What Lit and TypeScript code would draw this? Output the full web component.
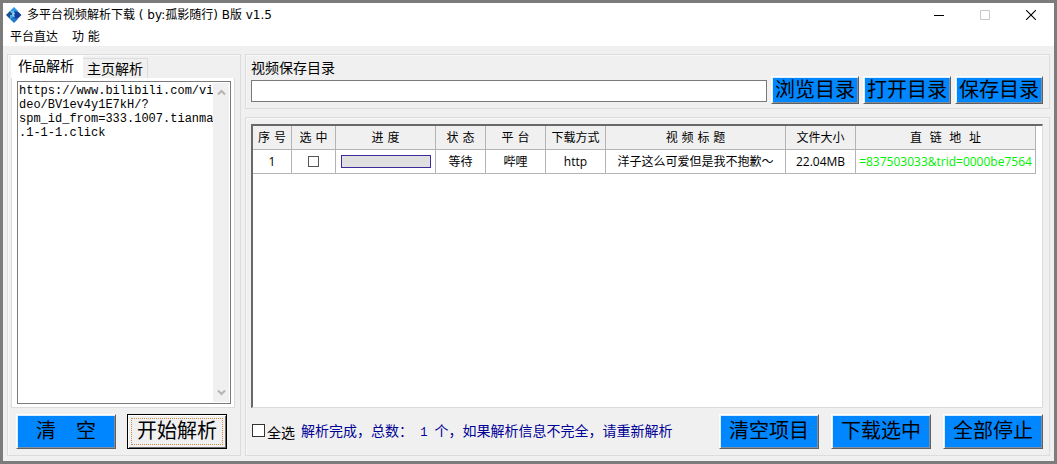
import { LitElement, html, css } from "lit";
import { customElement, state } from "lit/decorators.js";

interface Task {
  index: number;
  state: string;
  platform: string;
  protocol: string;
  title: string;
  size: string;
  url: string;
}

@customElement("app-root")
export class AppRoot extends LitElement {
  static styles = css`
    :host {
      display: block;
      --ui: "Open Sans", "Noto Sans CJK SC", sans-serif;
      --song: "Noto Sans CJK SC", sans-serif;
      --mono: "Liberation Mono", "Noto Sans CJK SC", monospace;
      --line: #dcdcdc;
      font: 12px/16px var(--ui);
      color: #000;
    }
    * {
      box-sizing: border-box;
    }
    button,
    input,
    textarea {
      font: inherit;
      color: inherit;
      margin: 0;
      padding: 0;
      border-radius: 0;
    }
    .window {
      display: flex;
      flex-direction: column;
      min-height: 100vh;
      border: 3px solid #7c7c7c;
      background: #f0f0f0;
    }
    .titlebar {
      display: flex;
      align-items: center;
      height: 24px;
      padding-left: 3px;
      background: #fff;
    }
    .logo {
      width: 16px;
      height: 16px;
      margin-right: 5px;
    }
    .title {
      flex: 1;
      margin: 0;
      font: 12px/16px "DejaVu Sans", "Noto Sans CJK SC", sans-serif;
    }
    .control {
      width: 46px;
      height: 24px;
      border: 0;
      background: none;
    }
    .control svg {
      display: block;
      margin: 0 auto;
    }
    .menu {
      display: flex;
      gap: 14px;
      height: 19px;
      padding: 1px 7px 0;
      background: #fff;
      font-family: "DejaVu Sans", "Noto Sans CJK SC", sans-serif;
    }
    .menu button {
      border: 0;
      background: none;
    }
    .body {
      flex: 1;
      display: flex;
      gap: 4px;
      padding: 8px 4px 5px;
    }
    .group {
      border: 1px solid var(--line);
      box-shadow: inset 1px 1px #f8f8f8;
    }
    .left {
      display: flex;
      flex-direction: column;
      flex: none;
      width: 234px;
      padding: 0 5px 6px 3px;
      font: 14px/16px var(--song);
    }
    .tabs {
      display: flex;
      align-items: flex-end;
      height: 23px;
    }
    .tab {
      height: 20px;
      padding: 0 4px 2px;
      border: 1px solid var(--line);
      border-left: 0;
      border-bottom: 0;
      background: #f0f0f0;
    }
    .tab.active {
      height: 23px;
      padding: 0 8px 4px 7px;
      border-color: #fff;
      background: #fff;
    }
    .panel {
      flex: 1;
      display: flex;
      padding: 3px 3px 3px 5px;
      border: 1px solid var(--line);
      border-top: 0;
      background: #fff;
    }
    .editor {
      flex: 1;
      display: flex;
      border: 1px solid #7a7a7a;
      padding: 1px;
    }
    .editor textarea {
      flex: 1;
      min-width: 0;
      padding-top: 1px;
      border: 0;
      outline: 0;
      resize: none;
      overflow: hidden;
      background: #fff;
      font: 12px/14px var(--mono);
      white-space: pre;
    }
    .scroll {
      display: flex;
      flex-direction: column;
      justify-content: space-between;
      align-items: center;
      width: 16px;
      padding: 6px 0;
      background: #f0f0f0;
    }
    .actions {
      display: flex;
      gap: 11px;
      padding: 6px 0 0 5px;
    }
    .push {
      width: 100px;
      height: 35px;
      padding-bottom: 3px;
      border: 1px solid;
      border-color: #fff #606060 #606060 #fff;
      background: #0087ff;
      box-shadow: inset 1px 1px #d8ecff, inset -1px -1px #7f8fa0;
      font: 20px/24px var(--song);
      white-space: nowrap;
    }
    .push.small {
      flex: none;
      width: 88px;
      height: 28px;
    }
    .push.default {
      border-color: #000;
      background: #f0f0f0;
      box-shadow: inset 1px 1px #fff, inset -1px -1px #696969;
      padding: 3px;
    }
    .focus {
      display: block;
      padding-bottom: 3px;
      border: 1px dotted #c98a4a;
      line-height: 22px;
    }
    .right {
      flex: 1;
      min-width: 0;
      display: flex;
      flex-direction: column;
      gap: 8px;
    }
    .save {
      padding: 4px 6px 4px 5px;
    }
    .save label {
      display: block;
      padding-bottom: 1px;
      font: 14px/16px var(--song);
    }
    .path {
      display: flex;
      align-items: center;
      gap: 4px;
    }
    .path input {
      flex: 1;
      min-width: 0;
      height: 22px;
      margin-top: 2px;
      border: 1px solid #7a7a7a;
      background: #fff;
    }
    .list {
      flex: 1;
      display: flex;
      flex-direction: column;
      padding: 6px 6px 6px 5px;
    }
    .grid {
      flex: 1;
      padding-right: 6px;
      border: 1px solid;
      border-width: 2px 1px 1px 2px;
      border-color: #696969 #dcdcdc #dcdcdc #696969;
      background: #fff;
    }
    table {
      width: 100%;
      table-layout: fixed;
      border-spacing: 0;
    }
    th,
    td {
      height: 24px;
      padding: 0 3px;
      border: 0 solid #b4b4b4;
      border-width: 0 1px 1px 0;
      font-weight: 400;
      text-align: center;
      white-space: nowrap;
      overflow: hidden;
    }
    th {
      background: #f0f0f0;
      font-family: "DejaVu Sans", "Noto Sans CJK SC", sans-serif;
      white-space: pre;
    }
    .c-index { width: 39px; }
    .c-pick { width: 44px; }
    .c-progress { width: 100px; }
    .c-state { width: 50px; }
    .c-mid { width: 60px; }
    .c-size { width: 70px; }
    .c-url { width: 180px; }
    .url {
      display: flex;
      justify-content: center;
      overflow: hidden;
      color: #00f000;
    }
    input[type="checkbox"] {
      appearance: none;
      display: block;
      width: 13px;
      height: 13px;
      border: 1px solid #333;
      background: #fff;
    }
    input[type="checkbox"]:checked {
      background: #0087ff;
    }
    td input[type="checkbox"] {
      width: 11px;
      height: 11px;
      margin: 0 auto;
      border-color: #555;
    }
    progress {
      appearance: none;
      display: block;
      width: 90px;
      height: 13px;
      margin: 0 auto;
      border: 1px solid #3a2c9c;
      background: #e0e0e0;
    }
    progress::-webkit-progress-bar {
      background: #e0e0e0;
    }
    progress::-webkit-progress-value {
      background: #0087ff;
    }
    .footer {
      display: flex;
      align-items: center;
      gap: 12px;
      padding-top: 6px;
      font: 14px/16px var(--song);
    }
    .status {
      flex: 1;
      display: flex;
      align-items: center;
      gap: 6px;
      white-space: nowrap;
    }
    .all {
      display: flex;
      align-items: center;
      gap: 2px;
      padding-left: 1px;
    }
    .all input[type="checkbox"] {
      margin-bottom: 3px;
    }
    .message {
      color: #000096;
    }
    .count {
      font: 12px/16px var(--mono);
      white-space: pre;
    }
  `;

  @state() private tab = 0;
  @state() private source =
    "https://www.bilibili.com/vi\ndeo/BV1ev4y1E7kH/?\nspm_id_from=333.1007.tianma\n.1-1-1.click";

  private tabs = ["作品解析", "主页解析"];

  private tasks: Task[] = [
    {
      index: 1,
      state: "等待",
      platform: "哔哩",
      protocol: "http",
      title: "洋子这么可爱但是我不抱歉～",
      size: "22.04MB",
      url: "=837503033&trid=0000be7564",
    },
  ];

  private clear() {
    this.source = "";
  }

  private renderTitleBar() {
    return html`
      <header class="titlebar">
        <svg class="logo" viewBox="0 0 16 16">
          <path d="M8 0l4 4-4 4-4-4z" fill="#2a9be0" />
          <path d="M4 4l4 4-4 4-4-4z" fill="#1b4f94" />
          <path d="M8 8l4 4-4 4-4-4z" fill="#1f78c8" />
          <path d="M4 4h4v4z" fill="#63c3f2" />
          <path d="M4 12V8h4z" fill="#3fb0ea" />
          <path d="M8 4.500h4L15.500 8 12 11.500H9.500L7 9z" fill="#123f9c" />
          <path d="M6.500 6l1.500-1 1 1.500-1 1.500 1 1.500-1.500.5L6 8z" fill="#8fd0f4" />
        </svg>
        <h1 class="title">多平台视频解析下载 ( by:孤影随行) B版 v1.5</h1>
        <button class="control" aria-label="最小化">
          <svg width="10" height="10"><path d="M0 5.500h10" stroke="#000" /></svg>
        </button>
        <button class="control" aria-label="最大化" disabled>
          <svg width="10" height="10"><path d="M.5 .5h9v9h-9z" fill="none" stroke="#c8c8c8" /></svg>
        </button>
        <button class="control" aria-label="关闭">
          <svg width="10" height="10"><path d="M0 0l10 10M10 0L0 10" stroke="#000" stroke-width="1.1" /></svg>
        </button>
      </header>
      <nav class="menu">
        <button>平台直达</button>
        <button>功 能</button>
      </nav>
    `;
  }

  private renderSource() {
    return html`
      <section class="group left">
        <div class="tabs" role="tablist">
          ${this.tabs.map(
            (name, i) => html`<button
              role="tab"
              class="tab ${i === this.tab ? "active" : ""}"
              aria-selected=${i === this.tab ? "true" : "false"}
              @click=${() => (this.tab = i)}
            >${name}</button>`
          )}
        </div>
        <div class="panel" role="tabpanel">
          <div class="editor">
            <textarea
              aria-label="作品链接"
              spellcheck="false"
              .value=${this.source}
              @input=${(e: Event) => (this.source = (e.target as HTMLTextAreaElement).value)}
            ></textarea>
            <div class="scroll">
              <svg width="9" height="7"><path d="M1 5.500l3.500-3.500L8 5.500" fill="none" stroke="#b4b4b4" stroke-width="2" /></svg>
              <svg width="9" height="7"><path d="M1 1.500L4.500 5 8 1.500" fill="none" stroke="#b4b4b4" stroke-width="2" /></svg>
            </div>
          </div>
        </div>
        <div class="actions">
          <button class="push" @click=${this.clear}>清　空</button>
          <button class="push default"><span class="focus">开始解析</span></button>
        </div>
      </section>
    `;
  }

  private renderTable() {
    return html`
      <div class="grid">
        <table>
          <colgroup>
            <col class="c-index" /><col class="c-pick" /><col class="c-progress" />
            <col class="c-state" /><col class="c-mid" /><col class="c-mid" />
            <col /><col class="c-size" /><col class="c-url" />
          </colgroup>
          <thead>
            <tr>
              <th>序 号</th><th>选 中</th><th>进 度</th><th>状 态</th><th>平 台</th>
              <th>下载方式</th><th>视 频 标 题</th><th>文件大小</th><th>直  链  地  址</th>
            </tr>
          </thead>
          <tbody>
            ${this.tasks.map(
              (t) => html`<tr>
                <td>${t.index}</td>
                <td><input type="checkbox" aria-label="选中" /></td>
                <td><progress value="0" max="100" aria-label="进度"></progress></td>
                <td>${t.state}</td>
                <td>${t.platform}</td>
                <td>${t.protocol}</td>
                <td>${t.title}</td>
                <td>${t.size}</td>
                <td><div class="url">${t.url}</div></td>
              </tr>`
            )}
          </tbody>
        </table>
      </div>
    `;
  }

  render() {
    return html`
      <div class="window">
        ${this.renderTitleBar()}
        <main class="body">
          ${this.renderSource()}
          <div class="right">
            <section class="group save">
              <label for="dir">视频保存目录</label>
              <div class="path">
                <input id="dir" type="text" />
                <button class="push small">浏览目录</button>
                <button class="push small">打开目录</button>
                <button class="push small">保存目录</button>
              </div>
            </section>
            <section class="group list">
              ${this.renderTable()}
              <div class="footer">
                <div class="status">
                  <label class="all"><input type="checkbox" />全选</label>
                  <span class="message">解析完成，总数：<span class="count"> ${this.tasks.length} </span>个，如果解析信息不完全，请重新解析</span>
                </div>
                <button class="push">清空项目</button>
                <button class="push">下载选中</button>
                <button class="push">全部停止</button>
              </div>
            </section>
          </div>
        </main>
      </div>
    `;
  }
}
